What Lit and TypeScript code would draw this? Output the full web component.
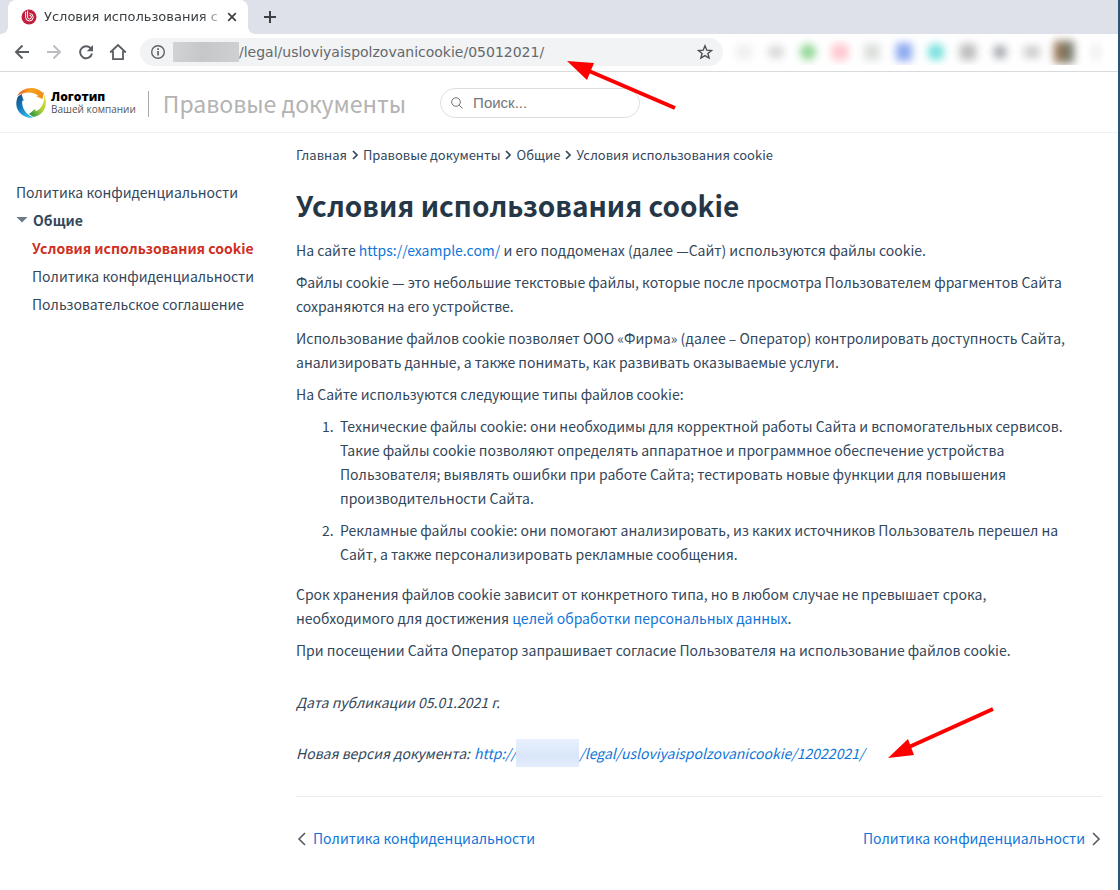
import { LitElement, html, css, svg } from "lit";
import { customElement, state } from "lit/decorators.js";
import { classMap } from "lit/directives/class-map.js";

const UI = css`
  *, *::before, *::after { box-sizing: border-box; }
  a { color: inherit; text-decoration: none; }
  button { border: 0; padding: 0; background: none; color: inherit; font: inherit; cursor: pointer; display: flex; align-items: center; justify-content: center; }
  svg { display: block; flex: none; }
`;

@customElement("browser-chrome")
class BrowserChrome extends LitElement {
  static styles = [UI, css`
    :host { display: block; font-family: "DejaVu Sans", sans-serif; color: #3c4043; }
    .strip { height: 34px; background: #dee1e9; display: flex; align-items: stretch; padding-left: 8px; }
    .tab { position: relative; width: 240px; background: #fff; border-radius: 8px 8px 0 0; display: flex; align-items: center; padding: 0 8px 0 12px; gap: 6px; }
    .tab::before, .tab::after { content: ""; position: absolute; bottom: 0; width: 8px; height: 8px; }
    .tab::before { left: -8px; background: radial-gradient(circle at 0 0, transparent 8px, #fff 8px); }
    .tab::after { right: -8px; background: radial-gradient(circle at 100% 0, transparent 8px, #fff 8px); }
    .title { flex: 1; min-width: 0; overflow: hidden; white-space: nowrap; font-size: 13px; line-height: 20px; mask-image: linear-gradient(to right, #000 158px, transparent 182px); }
    .close, .add { width: 16px; height: 16px; }
    .add { align-self: center; margin-left: 14px; }
    .toolbar { height: 38px; display: flex; align-items: center; padding: 0 0 1px 12px; border-bottom: 1px solid #d9dadc; }
    .nav { display: flex; gap: 12px; }
    .nav button { width: 20px; height: 28px; color: #5a5d61; }
    .nav button:disabled { color: #bbbdc0; }
    .omni { flex: 1; min-width: 0; height: 28px; margin-left: 12px; border-radius: 14px; background: #f1f3f4; display: flex; align-items: center; padding: 0 10px; color: #5f6368; }
    .host { width: 66px; height: 20px; margin-left: 7px; flex: none; background: linear-gradient(100deg, #d2d3d4, #c6c7c8 45%, #cfd0d1); }
    .url { flex: 1; min-width: 0; border: 0; padding: 0; background: none; outline: none; color: #65686c; font: 14px/20px "DejaVu Sans", sans-serif; }
    .exts { display: flex; flex: none; height: 31px; align-self: flex-start; align-items: center; gap: 16px; padding: 4px 14px 0 13px; overflow: hidden; }
    .ext { width: 16px; height: 16px; flex: none; filter: blur(4px); }
    .e0 { background: #f0f0f0; }
    .e1 { background: #d4d4d4; height: 12px; border-radius: 6px; }
    .e2 { background: #8ed491; border-radius: 8px; }
    .e3 { background: #ffc4cc; }
    .e4 { background: #dadedb; }
    .e5 { background: #8ba9f0; height: 18px; }
    .e6 { background: #74e0de; border-radius: 6px; }
    .e7 { background: #bbb; }
    .e8 { background: #9fa2a8; width: 12px; height: 12px; margin: 0 2px; }
    .e9 { background: #cbcbcb; height: 12px; }
    .e10 { background: linear-gradient(90deg, #a0774f, #6b7773); width: 20px; height: 22px; margin: 0 -2px; }
    .e11 { background: #ddd; width: 4px; margin: 0 6px; }
  `];
  render() {
    return html`
      <div class="strip">
        <div class="tab">
          <svg width="18" height="18" viewBox="0 0 18 18"><circle cx="9" cy="9" r="7.5" fill="#c01f3d"/><g fill="none" stroke="#fff"><path stroke-width="1" d="M5.600 3.800v5.400a3.800 3.800 0 1 0 4-3.800"/><path stroke-width="1" d="M7.600 2.600v6.600a1.900 1.900 0 1 0 1.900-2"/></g></svg>
          <span class="title">Условия использования cookie</span>
          <button class="close" aria-label="Закрыть вкладку"><svg width="10" height="10" viewBox="0 0 10 10"><path d="M1.2 1.2l7.6 7.6M8.8 1.2L1.2 8.8" stroke="#3c4043" stroke-width="1.7"/></svg></button>
        </div>
        <button class="add" aria-label="Новая вкладка"><svg width="14" height="14" viewBox="0 0 14 14"><path d="M7 1v12M1 7h12" stroke="#3c4043" stroke-width="2"/></svg></button>
      </div>
      <div class="toolbar">
        <div class="nav">
          <button aria-label="Назад"><svg width="16" height="16" viewBox="0 0 16 16" fill="none" stroke="currentColor" stroke-width="1.9"><path d="M15 8H2.5M8.5 1.5L2 8l6.5 6.5"/></svg></button>
          <button aria-label="Вперёд" disabled><svg width="16" height="16" viewBox="0 0 16 16" fill="none" stroke="currentColor" stroke-width="1.9"><path d="M1 8h12.5M7.5 1.5L14 8l-6.5 6.5"/></svg></button>
          <button aria-label="Обновить"><svg width="16" height="16" viewBox="0 0 16 16"><path d="M13.3 5.2A6 6 0 1 0 14 9.500" fill="none" stroke="currentColor" stroke-width="1.9"/><path d="M15 1v6.2H8.8z" fill="currentColor"/></svg></button>
          <button aria-label="Домой"><svg width="18" height="18" viewBox="0 0 18 18" fill="none" stroke="currentColor" stroke-width="1.8"><path d="M1.2 9.5L9 2l7.8 7.5M4 8v8.1h10V8"/></svg></button>
        </div>
        <div class="omni">
          <svg width="16" height="16" viewBox="0 0 16 16"><circle cx="8" cy="8" r="6.3" fill="none" stroke="currentColor" stroke-width="1.4"/><path d="M7.200 7h1.700v4.500H7.200zM7.200 4.300h1.700v1.600H7.200z" fill="currentColor"/></svg>
          <span class="host"></span>
          <input class="url" aria-label="Адрес страницы" value="/legal/usloviyaispolzovanicookie/05012021/">
          <button aria-label="Добавить в закладки"><svg width="16" height="16" viewBox="0 0 16 16"><path d="M8 1.8l1.8 4.4 4.7.3-3.6 3 1.200 4.600L8 11.600l-4.100 2.500 1.200-4.600-3.600-3 4.700-.3z" fill="none" stroke="#4d5054" stroke-width="1.4"/></svg></button>
        </div>
        <div class="exts">${Array.from({ length: 12 }, (_, i) => html`<span class="ext e${i}"></span>`)}</div>
      </div>`;
  }
}

@customElement("site-header")
class SiteHeader extends LitElement {
  static styles = [UI, css`
    :host { display: flex; align-items: center; height: 61px; padding: 2px 16px 0; border-bottom: 1px solid #eff0f1; }
    .logo { display: flex; align-items: center; gap: 5px; }
    .words { display: flex; flex-direction: column; font-family: "Open Sans", sans-serif; white-space: nowrap; }
    .name { font-size: 12px; line-height: 12px; font-weight: 800; color: #000; }
    .sub { font-size: 10px; line-height: 12px; color: #555; }
    .bar { width: 1px; height: 26px; margin: 2px 14px 0 12px; background: #a9a9a9; }
    .title { margin-right: 34px; white-space: nowrap; font: 23px/24px "Noto Sans CJK SC", sans-serif; color: #b3b3b3; }
    .search { display: flex; align-items: center; gap: 10px; width: 200px; height: 30px; padding: 0 10px; border: 1px solid #dcdfe1; border-radius: 15px; }
    .search input { flex: 1; min-width: 0; border: 0; padding: 0; outline: none; background: none; font: 15px/20px "Liberation Sans", sans-serif; color: #33475b; }
    .search input::placeholder { color: #757575; opacity: 1; }
  `];
  render() {
    return html`
      <a class="logo" href="#" aria-label="Логотип вашей компании">
        <svg width="30" height="30" viewBox="0 0 30 30">
          <defs>
            <linearGradient id="o" x1="0" x2="1"><stop offset="0" stop-color="#e5622a"/><stop offset=".5" stop-color="#f6a21c"/><stop offset="1" stop-color="#f08a1d"/></linearGradient>
            <linearGradient id="b" x1="0" y1="0" x2=".6" y2="1"><stop offset="0" stop-color="#134a7c"/><stop offset=".5" stop-color="#1277b8"/><stop offset="1" stop-color="#35b5e8"/></linearGradient>
            <linearGradient id="g" x1="1" y1="0" x2="0" y2="1"><stop offset="0" stop-color="#f5e02a"/><stop offset=".5" stop-color="#a6cd38"/><stop offset="1" stop-color="#138a44"/></linearGradient>
          </defs>
          <path fill="url(#o)" d="M1 8C5 1 14-2 22 1.500c2 .8 3.500 2 4.500 3.200L28 4l-1.500 7-6-2.500 1.500-1C17 3.500 8 3 1 8z"/>
          <path fill="url(#b)" d="M5.500 6l2.300 7-1.600-.4C5.500 19 9 25.500 17 29.500 8 31 .5 24 .3 16c0-3 .7-5.500 1.700-7.500z"/>
          <path fill="url(#g)" d="M28 7c4 8 1.500 17-6 20.500-2 1-3.500 1.300-5 1.300L13 26l6-5 .7 2.300C25.500 21 29 14 28 7z"/>
        </svg>
        <span class="words"><span class="name">Логотип</span><span class="sub">Вашей компании</span></span>
      </a>
      <span class="bar"></span>
      <span class="title">Правовые документы</span>
      <label class="search">
        <svg width="12" height="12" viewBox="0 0 12 12" fill="none" stroke="#6c6f72"><circle cx="5" cy="5" r="4.3"/><path d="M8.2 8.2l3.3 3.3"/></svg>
        <input type="text" aria-label="Поиск" placeholder="Поиск...">
      </label>`;
  }
}

@customElement("app-root")
class AppRoot extends LitElement {
  static styles = [UI, css`
    :host { display: block; position: relative; min-height: 100vh; background: #fff; border-right: 2px solid #2b5475; font: 14px/24px "Noto Sans CJK SC", sans-serif; color: #33475b; }
    .page { display: grid; grid-template-columns: 280px minmax(0, 1fr); }
    .side { padding: 45px 8px 0 16px; line-height: 28px; white-space: nowrap; }
    .side ul { list-style: none; margin: 0; padding: 0; }
    .side .sub { padding-left: 16px; }
    .group { gap: 5px; font-weight: 700; line-height: 28px; }
    .current { color: #d0301f; font-weight: 700; }
    .main { padding: 11px 16px 0; }
    .crumbs { display: flex; flex-wrap: wrap; align-items: center; gap: 4px; font-size: 13px; line-height: 22px; }
    h1 { margin: 21px 0 15px; font-size: 28px; line-height: 36px; font-weight: 700; color: #253746; }
    .text { padding-right: 24px; }
    p { margin: 0 0 8px; }
    ol { margin: 0 0 16px; padding-left: 44px; }
    ol li::marker { content: counter(list-item) ".\\a0\\a0"; }
    ol li + li { margin-top: 8px; }
    .main a.link { color: #0f76d8; }
    .date { margin: 28px 0 27px; }
    .version { display: flex; flex-wrap: wrap; align-items: center; gap: 0 4px; margin: 0; }
    .version a { display: flex; align-items: center; }
    .masked { width: 63px; height: 28px; margin: -2px 0; background: linear-gradient(#e9f0fd, #d9e6fa 60%, #e4edfc); }
    .pager { display: flex; justify-content: space-between; margin-top: 31px; padding-top: 29px; border-top: 1px solid #e9ebed; }
    .pager a { display: flex; align-items: center; gap: 5px; color: #0f76d8; }
    .pager svg { margin-top: 2px; }
    .arrow { position: absolute; pointer-events: none; }
    .a1 { left: 567px; top: 58px; }
    .a2 { left: 887px; top: 704px; }
  `];
  @state() open = true;
  chevron = svg`<path d="M2 1l4 4-4 4" fill="none" stroke="currentColor" stroke-width="1.7"/>`;
  render() {
    const crumbs = ["Главная", "Правовые документы", "Общие", "Условия использования cookie"];
    const docs = ["Условия использования cookie", "Политика конфиденциальности", "Пользовательское соглашение"];
    return html`
      <browser-chrome></browser-chrome>
      <site-header></site-header>
      <div class="page">
        <nav class="side">
          <ul>
            <li><a href="#">Политика конфиденциальности</a></li>
            <li>
              <button class="group" aria-expanded=${this.open} @click=${() => (this.open = !this.open)}>
                <svg width="12" height="6" viewBox="0 0 12 6"><path d="M.5 0h11L6 5.500z" fill="#6b7a88"/></svg>Общие
              </button>
              ${this.open ? html`<ul class="sub">${docs.map((d, i) => html`<li><a href="#" class=${classMap({ current: i === 0 })}>${d}</a></li>`)}</ul>` : ""}
            </li>
          </ul>
        </nav>
        <main class="main">
          <nav class="crumbs">${crumbs.map((c, i) => html`${i ? html`<svg width="8" height="10" viewBox="0 0 8 10">${this.chevron}</svg>` : ""}<a href="#">${c}</a>`)}</nav>
          <h1>Условия использования cookie</h1>
          <div class="text">
            <p>На сайте <a class="link" href="#">https://example.com/</a> и его поддоменах (далее —Сайт) используются файлы cookie.</p>
            <p>Файлы cookie — это небольшие текстовые файлы, которые после просмотра Пользователем фрагментов Сайта сохраняются на его устройстве.</p>
            <p>Использование файлов cookie позволяет ООО «Фирма» (далее – Оператор) контролировать доступность Сайта, анализировать данные, а также понимать, как развивать оказываемые услуги.</p>
            <p>На Сайте используются следующие типы файлов cookie:</p>
            <ol>
              <li>Технические файлы cookie: они необходимы для корректной работы Сайта и вспомогательных сервисов. Такие файлы cookie позволяют определять аппаратное и программное обеспечение устройства Пользователя; выявлять ошибки при работе Сайта; тестировать новые функции для повышения производительности Сайта.</li>
              <li>Рекламные файлы cookie: они помогают анализировать, из каких источников Пользователь перешел на Сайт, а также персонализировать рекламные сообщения.</li>
            </ol>
            <p>Срок хранения файлов cookie зависит от конкретного типа, но в любом случае не превышает срока, необходимого для достижения <a class="link" href="#">целей обработки персональных данных</a>.</p>
            <p>При посещении Сайта Оператор запрашивает согласие Пользователя на использование файлов cookie.</p>
            <p class="date"><em>Дата публикации 05.01.2021 г.</em></p>
            <p class="version"><em>Новая версия документа:</em> <a class="link" href="#"><em>http://</em><span class="masked"></span><em>/legal/usloviyaispolzovanicookie/12022021/</em></a></p>
          </div>
          <nav class="pager">
            <a href="#"><svg width="12" height="14" viewBox="0 0 12 14"><path d="M9 1L3 7l6 6" fill="none" stroke="#555c63" stroke-width="1.6"/></svg>Политика конфиденциальности</a>
            <a href="#">Политика конфиденциальности<svg width="12" height="14" viewBox="0 0 12 14"><path d="M3 1l6 6-6 6" fill="none" stroke="#555c63" stroke-width="1.6"/></svg></a>
          </nav>
        </main>
      </div>
      <svg class="arrow a1" width="112" height="54" viewBox="0 0 112 54"><path d="M22 13L108 50" stroke="#fe0000" stroke-width="4"/><path d="M0 3l27 2-7 17z" fill="#fe0000"/></svg>
      <svg class="arrow a2" width="110" height="58" viewBox="0 0 110 58"><path d="M22 43L106 5" stroke="#fe0000" stroke-width="4"/><path d="M1 54l20-19 6 16z" fill="#fe0000"/></svg>`;
  }
}
